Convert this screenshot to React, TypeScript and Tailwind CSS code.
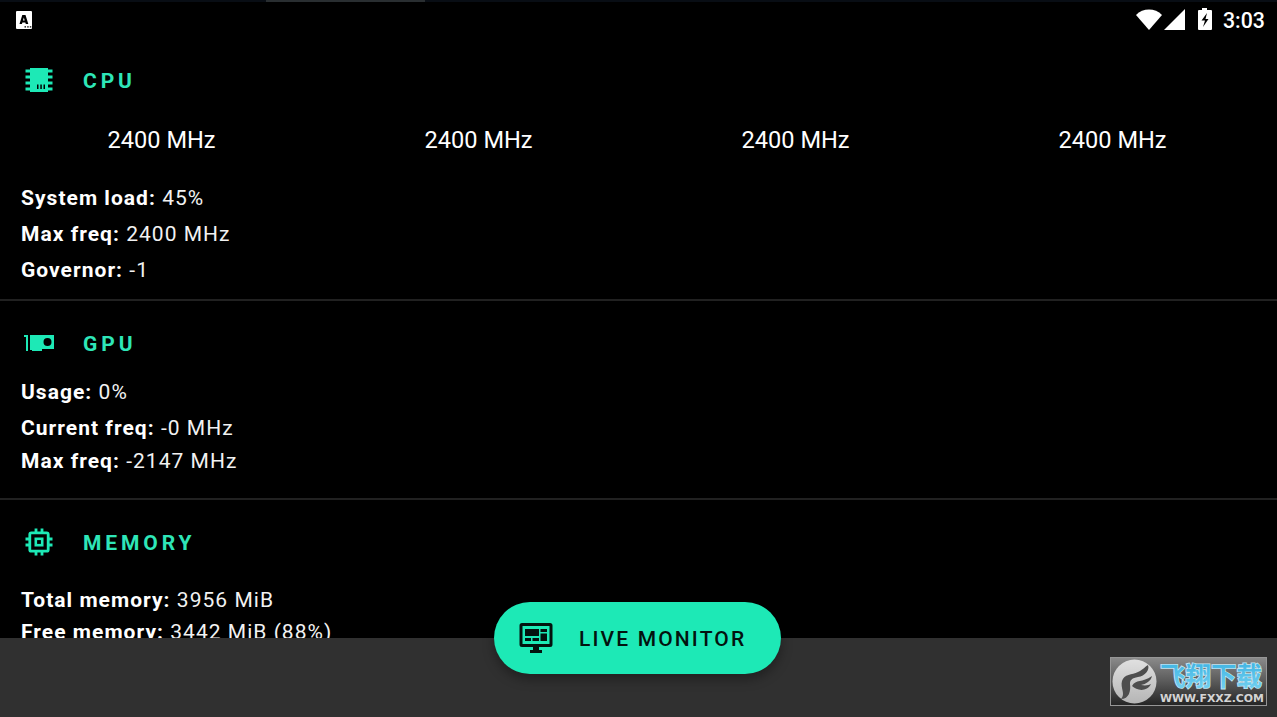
import React from 'react';

interface InfoRowProps {
  label: string;
  value: string;
  className?: string;
}

interface SectionHeaderProps {
  icon: React.ReactNode;
  title: string;
}

const cores = ['2400 MHz', '2400 MHz', '2400 MHz', '2400 MHz'];

function InfoRow({ label, value, className = 'h-9' }: InfoRowProps) {
  return (
    <div className={`flex items-center whitespace-pre pl-[21px] pt-px text-[21px] tracking-[1.03px] ${className}`}>
      <span className="font-bold">{label}: </span>
      <span className="text-[#f2f2f2]">{value}</span>
    </div>
  );
}

function SectionHeader({ icon, title }: SectionHeaderProps) {
  return (
    <div className="flex h-10 items-center text-[#2ee6b8]">
      <div className="flex w-[83px] items-center pl-6">{icon}</div>
      <h2 className="pt-1 text-[21px] font-bold tracking-[3.9px]">{title}</h2>
    </div>
  );
}

function CpuIcon() {
  return (
    <svg width="30" height="26" viewBox="0 0 30 26" fill="#1de9b6">
      <path d="M6 1h18v24H6z" />
      <path d="M1.5 2.5H6v3H1.5zM1.5 8.5H6v3H1.5zM1.5 14.5H6v3H1.5zM1.5 20.5H6v3H1.5zM24 2.5h4.5v3H24zM24 8.5h4.5v3H24zM24 14.5h4.5v3H24zM24 20.5h4.5v3H24z" />
      <path d="M13 17.5h1.5V22H13zM16.3 17.5h1.5V22h-1.5zM19.5 17.5H21V22h-1.5z" fill="#000" />
    </svg>
  );
}

function GpuIcon() {
  return (
    <svg width="31" height="18" viewBox="0 0 31 18" fill="#1de9b6">
      <path d="M0 1h4v16H2V3H0z" />
      <path
        fillRule="evenodd"
        d="M6 1h24v14H18v2H8v-1H6zM23.5 4a4 4 0 1 0 0 8 4 4 0 0 0 0-8z"
      />
    </svg>
  );
}

function MemoryIcon() {
  return (
    <svg width="30" height="30" viewBox="0 0 30 30" fill="none" stroke="#1de9b6">
      <rect x="5.8" y="5.8" width="18.4" height="18.4" rx="1.5" strokeWidth="2.8" />
      <rect x="11.8" y="11.8" width="6.4" height="6.4" strokeWidth="2.6" />
      <path
        d="M12 1.5V6M18 1.5V6M12 24v4.5M18 24v4.5M1.5 12H6M1.5 18H6M24 12h4.5M24 18h4.5"
        strokeWidth="2.8"
      />
    </svg>
  );
}

function MonitorIcon() {
  return (
    <svg width="34" height="32" viewBox="0 0 34 32" fill="#03130f">
      <path
        fillRule="evenodd"
        d="M3 1h28a2.5 2.5 0 0 1 2.5 2.5v19A2.5 2.5 0 0 1 31 25H20v3h3v3H11v-3h3v-3H3A2.5 2.5 0 0 1 .5 22.5v-19A2.5 2.5 0 0 1 3 1zM3.5 4v18h27V4z"
      />
      <path d="M6 7h14v7H6zM21.5 7H28v3h-6.5zM21.5 11.5H28V19h-6.5zM6 16h6v3H6zM13.5 16H20v3h-6.5z" />
    </svg>
  );
}

function StatusBar() {
  return (
    <div className="flex h-9 items-center justify-between pl-4 pr-[11px]">
      <svg width="16" height="18" viewBox="0 0 16 18">
        <rect width="16" height="18" rx="1" fill="#fff" />
        <path
          fillRule="evenodd"
          d="M6.3 4h3.2L12.3 13H9.8L9.3 11.4H6.4L5.9 13H3.5zM7.85 6.5 7 9.6h1.7z"
        />
        <path d="M8.5 15.2h1.5v1.4H8.5zM11.2 15.2h1.5v1.4h-1.5zM13.8 15.2h1.5v1.4h-1.5z" />
      </svg>
      <div className="flex items-center">
        <svg width="78" height="24" viewBox="0 0 78 24" fill="#fff">
          <path d="M0 7C7-.2 19-.2 26 7L13 22z" />
          <path d="M49 1v21H28z" />
          <path
            fillRule="evenodd"
            d="M66 0h5v2h4a1 1 0 0 1 1 1v18a1 1 0 0 1-1 1H63a1 1 0 0 1-1-1V3a1 1 0 0 1 1-1h3zM71 5l-5.5 7.5H69L67 19l5.5-8H69.5z"
          />
        </svg>
        <span className="ml-[9px] w-[43px] whitespace-nowrap pt-0.5 text-[21.3px] font-medium">3:03</span>
      </div>
    </div>
  );
}

function Watermark() {
  return (
    <svg width="157" height="49" viewBox="0 0 157 49">
      <defs>
        <linearGradient id="badge" x1="0" y1="0" x2="0" y2="1">
          <stop offset="0" stopColor="#8b8b8b" />
          <stop offset="0.5" stopColor="#5a5a5a" />
          <stop offset="1" stopColor="#242424" />
        </linearGradient>
        <linearGradient id="disc" x1="0" y1="0" x2="0" y2="1">
          <stop offset="0" stopColor="#e0e0e0" />
          <stop offset="1" stopColor="#b5b5b5" />
        </linearGradient>
        <linearGradient id="name" x1="0" y1="0" x2="0" y2="1">
          <stop offset="0" stopColor="#35aee0" />
          <stop offset="1" stopColor="#79d4f2" />
        </linearGradient>
      </defs>
      <rect x="0.5" y="0.5" width="156" height="48" fill="url(#badge)" stroke="#969696" />
      <circle cx="24.5" cy="24.5" r="22" fill="url(#disc)" />
      <path
        d="M11 42C16 37 10 31 12 24 14 17 22 18 28 15 34 12 36 9 38 8 40 13 35 19 28 20 22 21 20 23 20 27 21 34 19 42 11 42z"
        fill="#4e4e4e"
      />
      <path d="M22 29C26 22 32 26 42 19 41 24 36 27 31 28 36 29 39 28 41 27 37 35 27 34 22 29z" fill="#4e4e4e" />
      <text
        x="50"
        y="29"
        textLength="102"
        lengthAdjust="spacingAndGlyphs"
        className="font-['Noto_Sans_CJK_SC',sans-serif] text-[26px] font-bold"
        fill="url(#name)"
        stroke="#c4e6f2"
        strokeWidth="1.6"
        paintOrder="stroke"
      >
        飞翔下载
      </text>
      <text
        x="50"
        y="45"
        textLength="104"
        lengthAdjust="spacingAndGlyphs"
        className="font-['DejaVu_Sans',sans-serif] text-[10.5px] font-bold"
        fill="#d4d4d4"
      >
        WWW.FXXZ.COM
      </text>
    </svg>
  );
}

export default function App() {
  return (
    <div className="relative flex h-[717px] w-[1277px] flex-col overflow-hidden bg-black font-['Roboto',sans-serif] text-white">
      <div className="h-0.5 shrink-0 bg-[#080d14]">
        <div className="ml-[266px] h-0.5 w-[159px] bg-[#292e31]" />
      </div>
      <StatusBar />

      {/* Device info */}
      <main className="h-[600px] shrink-0 overflow-hidden">
        <section className="border-b-2 border-[#212121] pb-[11px] pt-[22px]">
          <SectionHeader icon={<CpuIcon />} title="CPU" />
          <div className="grid h-20 grid-cols-4 items-center pl-[3px] pr-[6px] pt-0.5">
            {cores.map((freq, index) => (
              <span key={index} className="text-center text-[23.6px]">
                {freq}
              </span>
            ))}
          </div>
          <InfoRow label="System load" value="45%" />
          <InfoRow label="Max freq" value="2400 MHz" />
          <InfoRow label="Governor" value="-1" />
        </section>

        <section className="border-b-2 border-[#212121] pb-[22px] pt-[22px]">
          <SectionHeader icon={<GpuIcon />} title="GPU" />
          <div className="mt-[11px]">
            <InfoRow label="Usage" value="0%" />
            <InfoRow label="Current freq" value="-0 MHz" />
            <InfoRow label="Max freq" value="-2147 MHz" className="h-[30px]" />
          </div>
        </section>

        <section className="pt-[22px]">
          <SectionHeader icon={<MemoryIcon />} title="MEMORY" />
          <div className="mt-5">
            <InfoRow label="Total memory" value="3956 MiB" />
            <InfoRow label="Free memory" value="3442 MiB (88%)" className="h-7" />
          </div>
        </section>
      </main>

      <footer className="flex flex-1 items-start justify-end bg-[#303030] pr-[10px] pt-[19px]">
        <Watermark />
      </footer>

      {/* Floating action button */}
      <button className="absolute bottom-[43px] left-[494px] flex h-[72px] w-[287px] items-center rounded-full bg-[#1de9b6] pl-[25px] text-[#03130f] shadow-[0_5px_12px_rgba(0,0,0,0.35)]">
        <MonitorIcon />
        <span className="ml-[26px] whitespace-nowrap pt-1 text-[21px] font-medium tracking-[2.15px]">LIVE MONITOR</span>
      </button>
    </div>
  );
}
